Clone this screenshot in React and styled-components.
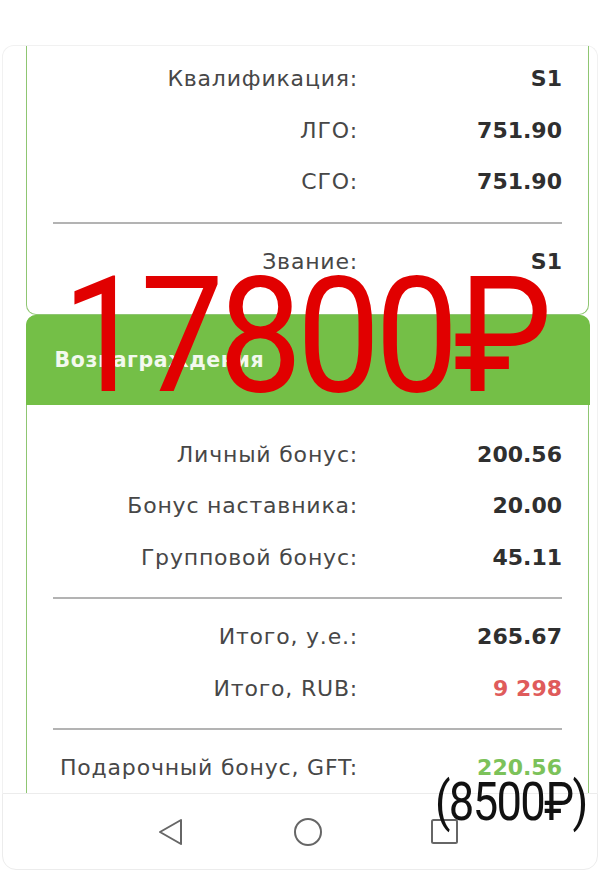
import React from 'react';
import styled, { createGlobalStyle } from 'styled-components';

const GlobalStyle = createGlobalStyle`
  body {
    margin: 0;
    background: #fff;
    font-family: "DejaVu Sans", "Open Sans", sans-serif;
  }
`;

// Whole phone screen
const Screen = styled.div`
  position: relative;
  width: 600px;
  height: 877px;
  display: flex;
  flex-direction: column;
  overflow: hidden;
  background: #fff;
`;

const Scroll = styled.div`
  flex: 1;
  overflow: hidden;
  padding-top: 45px;
`;

// Faint outer sheet behind the cards
const Sheet = styled.div`
  margin: 0 2px;
  border: 1px solid #f1f1f1;
  border-bottom: none;
  border-radius: 12px 12px 0 0;
  padding: 0 8px 0 23px;
  height: 100%;
  box-sizing: border-box;
`;

const Card = styled.div`
  border: 1.5px solid #8fc672;
  border-top: ${p => (p.$open ? 'none' : '1.5px solid #8fc672')};
  border-bottom: ${p => (p.$tail ? 'none' : '1.5px solid #8fc672')};
  border-radius: ${p => (p.$open ? '0 0 10px 10px' : '10px 10px 0 0')};
  background: #fff;
  padding: ${p => p.$pad};
`;

const CardHeader = styled.div`
  height: 90px;
  margin: -1.5px -1.5px 0;
  border-radius: 10px 10px 0 0;
  background: #74bf47;
  display: flex;
  align-items: center;
  padding-left: 29px;
  color: #f3f9ee;
  font-size: 20.5px;
  font-weight: 600;
  letter-spacing: 0.6px;
`;

const Spacer = styled.div`
  height: ${p => p.$h}px;
`;

const Row = styled.div`
  display: grid;
  grid-template-columns: 305px 1fr;
  align-items: center;
  height: 51.5px;
  padding: 0 26px;
  font-size: 22px;
`;

const Label = styled.span`
  text-align: right;
  color: #474747;
  letter-spacing: 0.8px;
  white-space: nowrap;
`;

const Value = styled.span`
  text-align: right;
  font-weight: 700;
  letter-spacing: 0;
  color: ${p => p.$color || '#2f2f2f'};
`;

const Divider = styled.hr`
  border: none;
  height: 2px;
  background: #b3b3b3;
  margin: 14px 26px 12px;
`;

const NavBar = styled.div`
  height: 75px;
  margin: 0 2px 7px;
  border: 1px solid #ececec;
  border-radius: 0 0 14px 14px;
  background: #fff;
  display: flex;
  align-items: center;
  justify-content: center;
  gap: 107px;
  padding-left: 16px;
`;

const NavIcon = styled.svg`
  width: 30px;
  height: 30px;
  stroke: #666;
  stroke-width: 2;
  fill: none;
`;

// Hand-written price marks lying over the screenshot
const Stamp = styled.div`
  position: absolute;
  left: ${p => p.$x}px;
  top: ${p => p.$y}px;
  font-family: Roboto, "DejaVu Sans", sans-serif;
  font-size: ${p => p.$size}px;
  line-height: 1;
  color: ${p => p.$color};
  letter-spacing: ${p => p.$ls}px;
  transform: scaleX(${p => p.$sx});
  transform-origin: left top;
  white-space: nowrap;
  pointer-events: none;
`;

const stats = [
  { label: 'Квалификация:', value: 'S1' },
  { label: 'ЛГО:', value: '751.90' },
  { label: 'СГО:', value: '751.90' },
];

const bonuses = [
  { label: 'Личный бонус:', value: '200.56' },
  { label: 'Бонус наставника:', value: '20.00' },
  { label: 'Групповой бонус:', value: '45.11' },
];

const totals = [
  { label: 'Итого, у.е.:', value: '265.67' },
  { label: 'Итого, RUB:', value: '9 298', color: '#df5b5b' },
];

const renderRows = rows =>
  rows.map(r => (
    <Row key={r.label}>
      <Label>{r.label}</Label>
      <Value $color={r.color}>{r.value}</Value>
    </Row>
  ));

export default function App() {
  return (
    <>
      <GlobalStyle />
      <Screen>
        <Scroll>
          <Sheet>
            <Card $open $pad="7px 0 27px">
              {renderRows(stats)}
              <Divider />
              {renderRows([{ label: 'Звание:', value: 'S1' }])}
            </Card>
            <Card $tail $pad="0">
              <CardHeader>Вознаграждения</CardHeader>
              <Spacer $h={24} />
              {renderRows(bonuses)}
              <Divider />
              {renderRows(totals)}
              <Divider />
              {renderRows([{ label: 'Подарочный бонус, GFT:', value: '220.56', color: '#7cc25a' }])}
            </Card>
          </Sheet>
        </Scroll>
        <NavBar>
          <NavIcon viewBox="0 0 30 30">
            <path d="M25 3 L4 15 L25 27 Z" strokeLinejoin="round" />
          </NavIcon>
          <NavIcon viewBox="0 0 30 30">
            <circle cx="15" cy="15" r="13" />
          </NavIcon>
          <NavIcon viewBox="0 0 30 30">
            <rect x="2" y="3" width="25" height="23" rx="1.5" />
          </NavIcon>
        </NavBar>
        <Stamp $x={62} $y={255} $size={162} $ls={-6} $sx={0.92} $color="#e10000">17800₽</Stamp>
        <Stamp $x={435} $y={775} $size={54} $ls={-2} $sx={0.84} $color="#111">(8500₽)</Stamp>
      </Screen>
    </>
  );
}
